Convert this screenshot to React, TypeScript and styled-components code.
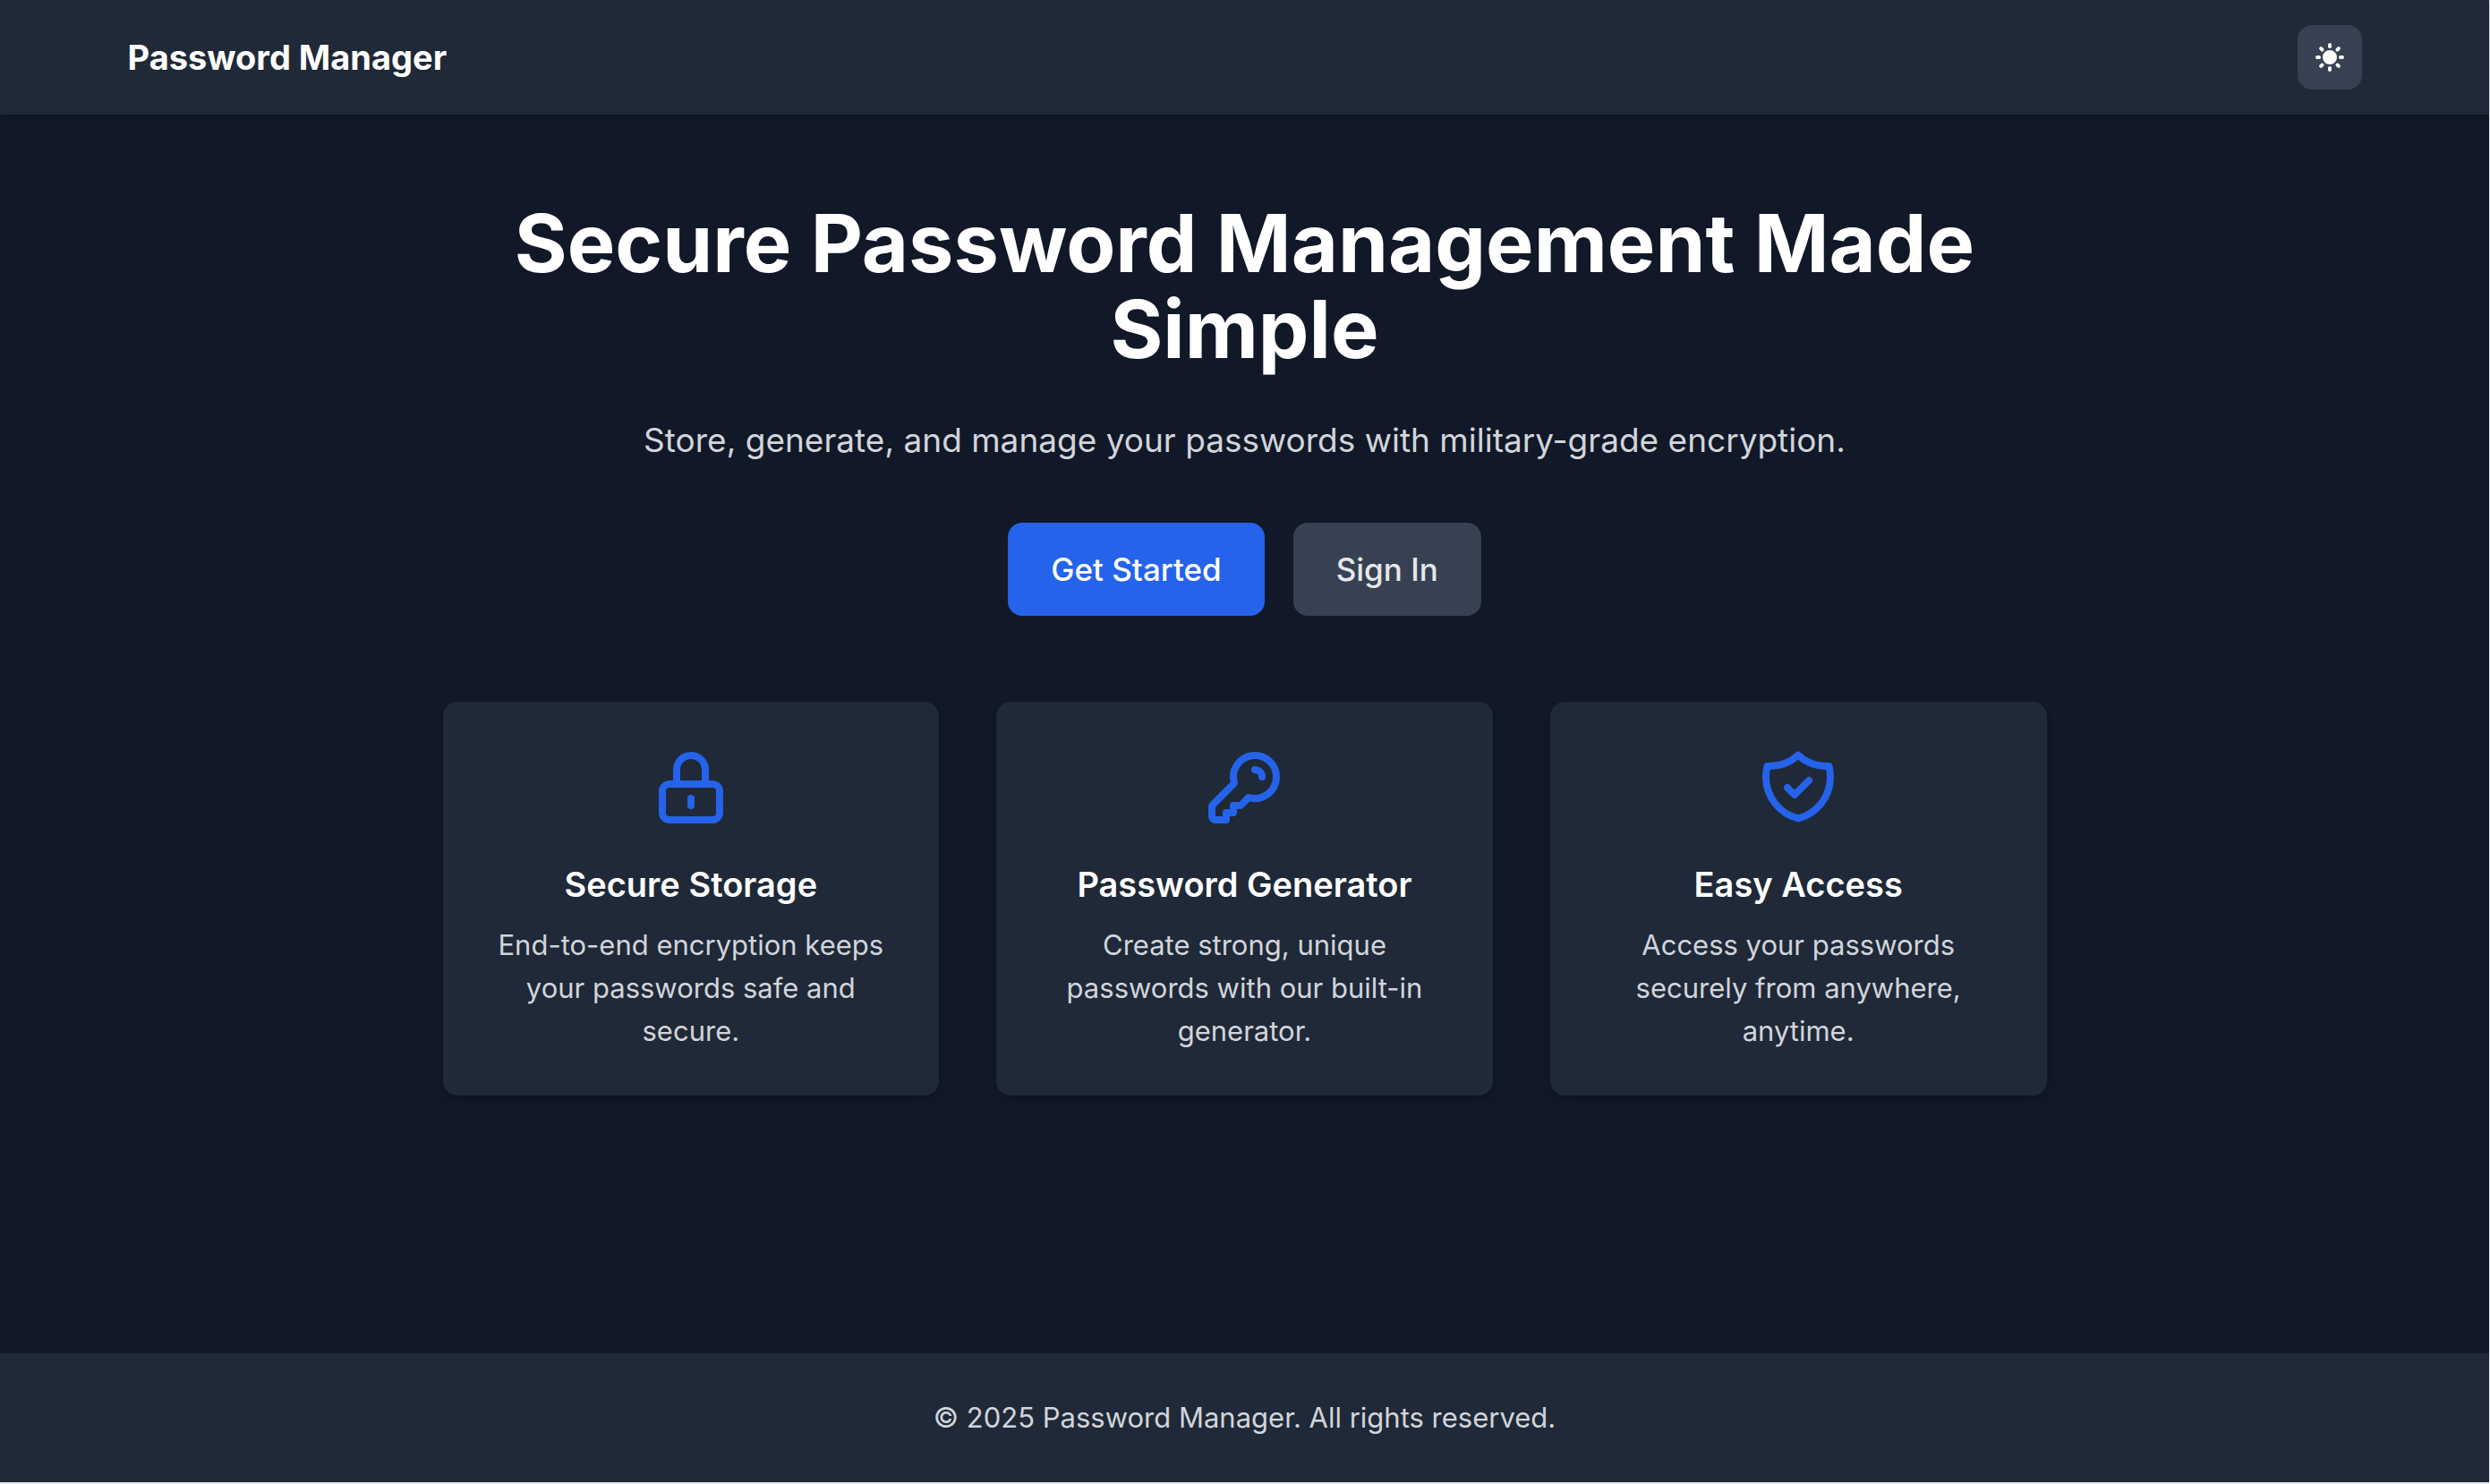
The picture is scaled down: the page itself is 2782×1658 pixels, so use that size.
import React from "react";
import styled, { createGlobalStyle } from "styled-components";

const colors = {
  edge: "#e5e7eb",
  page: "#111827",
  surface: "#1f2937",
  control: "#374151",
  accent: "#2563eb",
  text: "#ffffff",
  muted: "#d1d5db",
  soft: "#e5e7eb",
};

const GlobalStyle = createGlobalStyle`
  *, *::before, *::after { box-sizing: border-box; }
  body {
    margin: 0;
    color: ${colors.text};
    font-family: Inter, "Liberation Sans", sans-serif;
    font-size: 31px;
    line-height: 48px;
    -webkit-font-smoothing: antialiased;
  }
  h1, h2, p { margin: 0; }
`;

const Page = styled.div`
  min-height: 100vh;
  display: flex;
  flex-direction: column;
  border: solid ${colors.edge};
  border-width: 0 1px 2px 0;
  background: ${colors.page};
`;

const Header = styled.header`
  background: ${colors.surface};
  box-shadow: 0 2px 6px rgba(0, 0, 0, 0.1), 0 2px 4px -2px rgba(0, 0, 0, 0.1);
`;

const Nav = styled.nav`
  max-width: 2560px;
  height: 128px;
  margin: 0 auto;
  padding: 0 32px;
  display: flex;
  align-items: center;
  justify-content: space-between;
`;

const Brand = styled.a`
  color: ${colors.text};
  font-size: 38px;
  line-height: 56px;
  font-weight: 700;
  text-decoration: none;
`;

const ThemeToggle = styled.button`
  display: flex;
  padding: 16px;
  border: 0;
  border-radius: 16px;
  background: ${colors.control};
  color: ${colors.text};
  cursor: pointer;

  svg {
    width: 40px;
    height: 40px;
  }
`;

const Main = styled.main`
  flex: 1;
  width: 100%;
  max-width: 1856px;
  margin: 0 auto;
  padding: 96px 32px;
  text-align: center;
`;

const Title = styled.h1`
  margin-bottom: 48px;
  font-size: 90px;
  line-height: 96px;
  font-weight: 700;
`;

const Lead = styled.p`
  margin-bottom: 64px;
  color: ${colors.muted};
  font-size: 37px;
  line-height: 56px;
`;

const Actions = styled.div`
  display: flex;
  justify-content: center;
  gap: 32px;
  margin-bottom: 96px;
`;

const ActionButton = styled.button<{ $primary?: boolean }>`
  padding: 24px 48px;
  border: 0;
  border-radius: 16px;
  background: ${(p) => (p.$primary ? colors.accent : colors.control)};
  color: ${(p) => (p.$primary ? colors.text : colors.soft)};
  font-family: inherit;
  font-size: 35px;
  line-height: 56px;
  font-weight: 500;
  cursor: pointer;
`;

const Features = styled.section`
  display: grid;
  grid-template-columns: repeat(3, 1fr);
  gap: 64px;
`;

const Card = styled.article`
  padding: 48px;
  border-radius: 16px;
  background: ${colors.surface};
  box-shadow: 0 8px 12px -2px rgba(0, 0, 0, 0.1), 0 4px 8px -4px rgba(0, 0, 0, 0.1);
`;

const CardIcon = styled.svg`
  display: block;
  width: 96px;
  height: 96px;
  margin: 0 auto 32px;
  fill: none;
  stroke: ${colors.accent};
  stroke-width: 2;
  stroke-linecap: round;
  stroke-linejoin: round;
`;

const CardTitle = styled.h2`
  margin-bottom: 16px;
  font-size: 38px;
  line-height: 56px;
  font-weight: 600;
`;

const CardText = styled.p`
  color: ${colors.muted};
`;

const Footer = styled.footer`
  padding: 48px 32px;
  background: ${colors.surface};
  color: ${colors.muted};
  text-align: center;
`;

const features = [
  {
    title: "Secure Storage",
    text: "End-to-end encryption keeps your passwords safe and secure.",
    icon: "M12 15v2m-6 4h12a2 2 0 002-2v-6a2 2 0 00-2-2H6a2 2 0 00-2 2v6a2 2 0 002 2zm10-10V7a4 4 0 00-8 0v4h8z",
  },
  {
    title: "Password Generator",
    text: "Create strong, unique passwords with our built-in generator.",
    icon: "M15 7a2 2 0 012 2m4 0a6 6 0 01-7.743 5.743L11 17H9v2H7v2H4a1 1 0 01-1-1v-2.586a1 1 0 01.293-.707l5.964-5.964A6 6 0 1121 9z",
  },
  {
    title: "Easy Access",
    text: "Access your passwords securely from anywhere, anytime.",
    icon: "M9 12l2 2 4-4m5.618-4.016A11.955 11.955 0 0112 2.944a11.955 11.955 0 01-8.618 3.04A12.02 12.02 0 003 9c0 5.591 3.824 10.29 9 11.622 5.176-1.332 9-6.03 9-11.622 0-1.042-.133-2.052-.382-3.016z",
  },
];

function SunIcon() {
  return (
    <svg viewBox="0 0 20 20" fill="currentColor" aria-hidden="true">
      <path
        fillRule="evenodd"
        clipRule="evenodd"
        d="M10 2a1 1 0 011 1v1a1 1 0 11-2 0V3a1 1 0 011-1zm4 8a4 4 0 11-8 0 4 4 0 018 0zm-.464 4.95l.707.707a1 1 0 001.414-1.414l-.707-.707a1 1 0 00-1.414 1.414zm2.12-10.607a1 1 0 010 1.414l-.706.707a1 1 0 11-1.414-1.414l.707-.707a1 1 0 011.414 0zM17 11a1 1 0 100-2h-1a1 1 0 100 2h1zm-7 4a1 1 0 011 1v1a1 1 0 11-2 0v-1a1 1 0 011-1zM5.05 6.464A1 1 0 106.465 5.05l-.708-.707a1 1 0 00-1.414 1.414l.707.707zm1.414 8.486l-.707.707a1 1 0 01-1.414-1.414l.707-.707a1 1 0 011.414 1.414zM4 11a1 1 0 100-2H3a1 1 0 000 2h1z"
      />
    </svg>
  );
}

export default function App() {
  return (
    <>
      <GlobalStyle />
      <Page>
        <Header>
          <Nav>
            <Brand href="#">Password Manager</Brand>
            <ThemeToggle type="button" aria-label="Toggle theme">
              <SunIcon />
            </ThemeToggle>
          </Nav>
        </Header>
        <Main>
          <Title>Secure Password Management Made Simple</Title>
          <Lead>Store, generate, and manage your passwords with military-grade encryption.</Lead>
          <Actions>
            <ActionButton type="button" $primary>
              Get Started
            </ActionButton>
            <ActionButton type="button">Sign In</ActionButton>
          </Actions>
          <Features>
            {features.map((f) => (
              <Card key={f.title}>
                <CardIcon viewBox="0 0 24 24" aria-hidden="true">
                  <path d={f.icon} />
                </CardIcon>
                <CardTitle>{f.title}</CardTitle>
                <CardText>{f.text}</CardText>
              </Card>
            ))}
          </Features>
        </Main>
        <Footer>
          <p>© 2025 Password Manager. All rights reserved.</p>
        </Footer>
      </Page>
    </>
  );
}
